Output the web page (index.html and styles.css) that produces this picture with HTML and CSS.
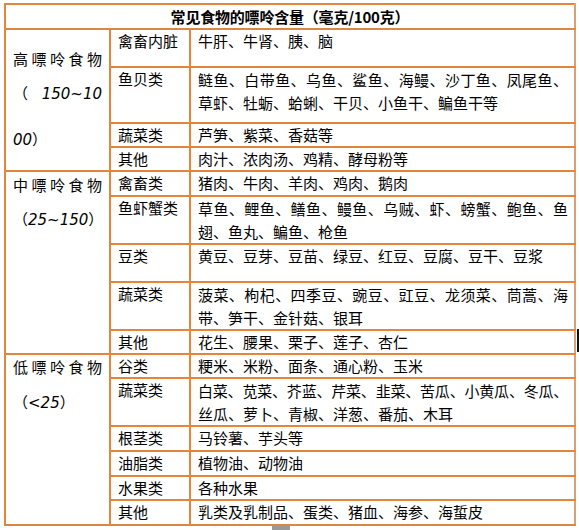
FILE: index.html
```html
<!DOCTYPE html>
<html lang="zh-CN">
<head>
<meta charset="utf-8">
<title>常见食物的嘌呤含量</title>
<link rel="stylesheet" href="styles.css">
</head>
<body>
<table class="purine">
  <colgroup><col class="c1"><col class="c2"><col class="c3"></colgroup>
  <tr class="h25"><th colspan="3" class="title">常见食物的嘌呤含量（毫克/100克）</th></tr>

  <tr class="h38">
    <td rowspan="4" class="level high">
      <div class="lv">高嘌呤食物</div>
      <div class="lv rng-a">（ <i class="num">150~10</i></div>
      <div class="rng-b"><i class="num">00</i>）</div>
    </td>
    <td>禽畜内脏</td><td>牛肝、牛肾、胰、脑</td>
  </tr>
  <tr class="h56"><td>鱼贝类</td><td><span class="ln full">鲢鱼、白带鱼、乌鱼、鲨鱼、海鳗、沙丁鱼、凤尾鱼、</span><span class="ln">草虾、牡蛎、蛤蜊、干贝、小鱼干、鳊鱼干等</span></td></tr>
  <tr class="h24"><td>蔬菜类</td><td>芦笋、紫菜、香菇等</td></tr>
  <tr class="h24"><td>其他</td><td>肉汁、浓肉汤、鸡精、酵母粉等</td></tr>

  <tr class="h25">
    <td rowspan="5" class="level mid">
      <div class="lv">中嘌呤食物</div>
      <div class="rng-m">（<i class="num">25~150</i>）</div>
    </td>
    <td>禽畜类</td><td>猪肉、牛肉、羊肉、鸡肉、鹅肉</td>
  </tr>
  <tr class="h48"><td>鱼虾蟹类</td><td><span class="ln full">草鱼、鲤鱼、鳝鱼、鳗鱼、乌贼、虾、螃蟹、鲍鱼、鱼</span><span class="ln">翅、鱼丸、鳊鱼、枪鱼</span></td></tr>
  <tr class="h38"><td>豆类</td><td>黄豆、豆芽、豆苗、绿豆、红豆、豆腐、豆干、豆浆</td></tr>
  <tr class="h47"><td>蔬菜类</td><td><span class="ln full">菠菜、枸杞、四季豆、豌豆、豇豆、龙须菜、茼蒿、海</span><span class="ln">带、笋干、金针菇、银耳</span></td></tr>
  <tr class="h24"><td>其他</td><td>花生、腰果、栗子、莲子、杏仁</td></tr>

  <tr class="h24">
    <td rowspan="6" class="level low">
      <div class="lv">低嘌呤食物</div>
      <div class="rng-l">（<i class="num">&lt;25</i>）</div>
    </td>
    <td>谷类</td><td>粳米、米粉、面条、通心粉、玉米</td>
  </tr>
  <tr class="h48"><td>蔬菜类</td><td><span class="ln full tight">白菜、苋菜、芥蓝、芹菜、韭菜、苦瓜、小黄瓜、冬瓜、</span><span class="ln">丝瓜、萝卜、青椒、洋葱、番茄、木耳</span></td></tr>
  <tr class="h25"><td>根茎类</td><td>马铃薯、芋头等</td></tr>
  <tr class="h25"><td>油脂类</td><td>植物油、动物油</td></tr>
  <tr class="h24"><td>水果类</td><td>各种水果</td></tr>
  <tr class="h25"><td>其他</td><td>乳类及乳制品、蛋类、猪血、海参、海蜇皮</td></tr>
</table>
<div class="edge-mark"></div>
<div class="scroll-tab"></div>
</body>
</html>
```

FILE: styles.css
```css
* { box-sizing: border-box; }

body {
  margin: 0;
  width: 579px;
  height: 530px;
  overflow: hidden;
  position: relative;
  background: #fff;
  color: #000;
  font-family: "Noto Sans CJK SC", "Noto Sans", sans-serif;
}

.purine {
  border-collapse: collapse;
  table-layout: fixed;
  width: 572px;
  margin: 3px 0 0 4px;
  font-size: 15px;
  line-height: 22px;
}

.c1 { width: 105px; }
.c2 { width: 80px; }

.purine td,
.purine th {
  border: 2px solid #e2853d;
  padding: 0 6px 0 7px;
  vertical-align: top;
  white-space: nowrap;
  text-align: left;
  font-weight: normal;
}

.purine td:last-child,
.purine th {
  border-right-color: #d9a07a;
}

.purine .title {
  text-align: center;
  vertical-align: middle;
  font-weight: bold;
  padding: 0;
  letter-spacing: -0.2px;
}

.h24 { height: 24px; }
.h25 { height: 25px; }
.h38 { height: 38px; }
.h47 { height: 47px; }
.h48 { height: 48px; }
.h56 { height: 56px; }

.ln { display: block; line-height: 22.5px; }
.ln:first-child { margin-top: 1px; }
.full { text-align: justify; text-align-last: justify; }
.tight { letter-spacing: -0.3px; }

.purine .level { padding: 0 7px 0 7px; }
.purine .high { padding-top: 18px; }
.purine .mid { padding-top: 2px; }
.purine .low { padding-top: 1px; }

.lv { text-align: justify; text-align-last: justify; }

.num {
  font-family: "DejaVu Sans", sans-serif;
  font-style: italic;
  font-size: 15px;
}

.rng-a { margin-top: 12px; }
.rng-b { margin-top: 23px; }
.rng-m { margin-top: 12px; }
.rng-l { margin-top: 13px; }

.edge-mark {
  position: absolute;
  left: 577px;
  top: 329px;
  width: 2px;
  height: 23px;
  background: #111;
}

.scroll-tab {
  position: absolute;
  left: 272px;
  top: 526px;
  width: 18px;
  height: 4px;
  background: #999;
}
```
